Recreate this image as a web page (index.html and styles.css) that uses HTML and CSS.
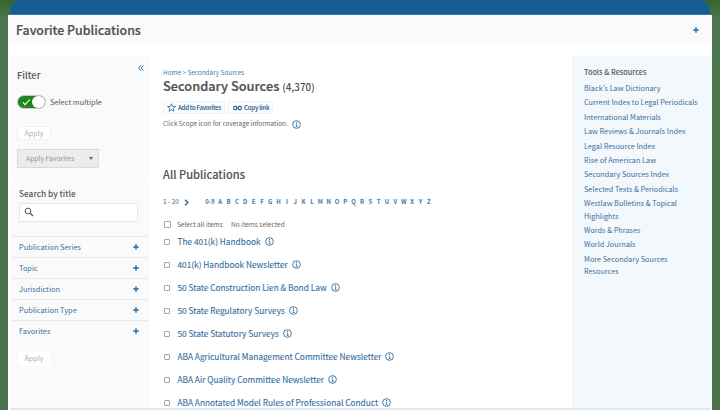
FILE: index.html
```html
<!DOCTYPE html>
<html lang="en">
<head>
<meta charset="utf-8">
<title>Favorite Publications</title>
<link rel="stylesheet" href="styles.css">
</head>
<body>
<svg class="defs" width="0" height="0" aria-hidden="true">
  <symbol id="info" viewBox="0 0 10 10"><circle cx="5" cy="5" r="4.3" fill="none" stroke="currentColor" stroke-width="1"/><path d="M4.2 4.4H5.2V7.2M4 7.3H6.3" fill="none" stroke="currentColor" stroke-width=".9"/><circle cx="5" cy="2.7" r=".65" fill="currentColor"/></symbol>
  <symbol id="plus" viewBox="0 0 6 6"><path d="M3 .3V5.7M.3 3H5.7" fill="none" stroke="currentColor" stroke-width="1.4"/></symbol>
</svg>
<div class="page">
  <div class="topbar"></div>
  <header class="header"><h1>Favorite Publications</h1><svg class="plus"><use href="#plus"/></svg></header>
  <div class="columns">
    <aside class="sidebar">
      <svg class="collapse" viewBox="0 0 6 6"><path d="M2.8.4.7 3l2.1 2.6M5.4.4 3.3 3l2.1 2.6" fill="none" stroke="currentColor" stroke-width=".9"/></svg>
      <h2 class="filter-title">Filter</h2>
      <div class="multi">
        <span class="toggle"><svg viewBox="0 0 9 8"><path d="M1 4.4 3.1 6.6 7.8 1.5" fill="none" stroke="#fff" stroke-width="1.1"/></svg><i class="knob"></i></span>
        <span class="multi-label">Select multiple</span>
      </div>
      <div class="apply">Apply</div>
      <div class="apply-fav"><span>Apply Favorites</span><i class="caret"></i></div>
      <div class="divider"></div>
      <h3 class="search-title">Search by title</h3>
      <div class="search"><svg viewBox="0 0 10 10"><circle cx="4" cy="4" r="2.9" fill="none" stroke="currentColor" stroke-width="1"/><path d="M6.2 6.2 9 9" stroke="currentColor" stroke-width="1.3"/></svg></div>
      <ul class="facets">
        <li><span>Publication Series</span><svg class="plus"><use href="#plus"/></svg></li>
        <li><span>Topic</span><svg class="plus"><use href="#plus"/></svg></li>
        <li><span>Jurisdiction</span><svg class="plus"><use href="#plus"/></svg></li>
        <li><span>Publication Type</span><svg class="plus"><use href="#plus"/></svg></li>
        <li><span>Favorites</span><svg class="plus"><use href="#plus"/></svg></li>
      </ul>
      <div class="apply apply-bottom">Apply</div>
    </aside>
    <main class="main">
      <div class="crumbs">Home &gt; Secondary Sources</div>
      <h2 class="title">Secondary Sources <span>(4,370)</span></h2>
      <div class="actions">
        <div class="action fav"><svg class="star" viewBox="0 0 10 10"><path d="M5 .8 6.2 3.8 9.4 4 6.9 6.1 7.7 9.2 5 7.5 2.3 9.2 3.1 6.1.6 4 3.8 3.8Z" fill="none" stroke="currentColor" stroke-width=".9"/></svg><span>Add to Favorites</span></div>
        <div class="action copy"><svg class="link" viewBox="0 0 10 6"><rect x=".7" y="1.2" width="3.5" height="3.6" rx="1.3" fill="none" stroke="currentColor" stroke-width="1.2"/><rect x="5.8" y="1.2" width="3.5" height="3.6" rx="1.3" fill="none" stroke="currentColor" stroke-width="1.2"/><path d="M3 3H7" stroke="currentColor"/></svg><span>Copy link</span></div>
      </div>
      <div class="scope"><span>Click Scope icon for coverage information.</span><svg class="info"><use href="#info"/></svg></div>
      <h3 class="all">All Publications</h3>
      <div class="pager"><span class="range">1 - 20</span><svg class="next" viewBox="0 0 5 7"><path d="M1 .7 3.9 3.5 1 6.3" fill="none" stroke="currentColor" stroke-width="1.4"/></svg>
        <div class="letters"><b class="num">0-9</b><b>A</b><b>B</b><b>C</b><b>D</b><b>E</b><b>F</b><b>G</b><b>H</b><b>I</b><b>J</b><b>K</b><b>L</b><b>M</b><b>N</b><b>O</b><b>P</b><b>Q</b><b>R</b><b>S</b><b>T</b><b>U</b><b>V</b><b>W</b><b>X</b><b>Y</b><b>Z</b></div>
      </div>
      <div class="select-row"><i class="box"></i><span class="sel">Select all items</span><span class="none">No items selected</span></div>
      <ul class="pubs">
        <li><i class="box"></i><span>The 401(k) Handbook</span><svg class="info"><use href="#info"/></svg></li>
        <li><i class="box"></i><span>401(k) Handbook Newsletter</span><svg class="info"><use href="#info"/></svg></li>
        <li><i class="box"></i><span>50 State Construction Lien &amp; Bond Law</span><svg class="info"><use href="#info"/></svg></li>
        <li><i class="box"></i><span>50 State Regulatory Surveys</span><svg class="info"><use href="#info"/></svg></li>
        <li><i class="box"></i><span>50 State Statutory Surveys</span><svg class="info"><use href="#info"/></svg></li>
        <li><i class="box"></i><span>ABA Agricultural Management Committee Newsletter</span><svg class="info"><use href="#info"/></svg></li>
        <li><i class="box"></i><span>ABA Air Quality Committee Newsletter</span><svg class="info"><use href="#info"/></svg></li>
        <li><i class="box"></i><span>ABA Annotated Model Rules of Professional Conduct</span><svg class="info"><use href="#info"/></svg></li>
      </ul>
    </main>
    <aside class="tools">
      <h4>Tools &amp; Resources</h4>
      <ul>
        <li>Black's Law Dictionary</li>
        <li>Current Index to Legal Periodicals</li>
        <li>International Materials</li>
        <li>Law Reviews &amp; Journals Index</li>
        <li>Legal Resource Index</li>
        <li>Rise of American Law</li>
        <li>Secondary Sources Index</li>
        <li>Selected Texts &amp; Periodicals</li>
        <li>Westlaw Bulletins &amp; Topical<br>Highlights</li>
        <li>Words &amp; Phrases</li>
        <li>World Journals</li>
        <li>More Secondary Sources<br>Resources</li>
      </ul>
    </aside>
  </div>
  <div class="bottom"></div>
</div>
</body>
</html>
```
FILE: styles.css
```css
* { box-sizing: border-box; margin: 0; padding: 0; }
body {
  width: 720px; height: 410px; overflow: hidden; padding: 0 8px;
  background: linear-gradient(#36652f 0, #4b754d 18px, #4a734b 100%);
  font-family: "Noto Sans CJK SC", "Open Sans", sans-serif;
  font-size: 7px; color: #555; white-space: nowrap;
}
ul { list-style: none; }
svg { display: block; flex: none; }
.defs { position: absolute; }
.page { height: 410px; background: linear-gradient(transparent 15px, #fff 15px); display: flex; flex-direction: column; overflow: hidden; }
.topbar { height: 15px; margin: 0 2px; border-radius: 10px 10px 0 0; background: linear-gradient(#155d92 14px, #3c78a3 14px); flex: none; }
.header { height: 29px; background: #fafafa; display: flex; align-items: center; justify-content: space-between; padding: 0 13px 0 8px; flex: none; }
h1 { font-size: 12.4px; line-height: 18px; font-weight: 500; color: #505050; -webkit-text-stroke: .2px; }
.plus { width: 6px; height: 6px; color: #27679a; }
.columns { display: flex; height: 352px; margin-top: 12px; overflow: hidden; flex: none; }

.sidebar { width: 138px; margin-left: 3px; background: #fafafa; flex: none; position: relative; }
.collapse { position: absolute; right: 5px; top: 9px; width: 6px; height: 6px; color: #27679a; }
.filter-title { font-size: 9.4px; line-height: 14px; font-weight: 500; padding: 12px 0 0 6px; }
.multi { display: flex; align-items: center; height: 14px; margin: 13px 0 0 6px; gap: 4px; }
.toggle { width: 29px; height: 14px; border-radius: 7px; background: #21851f; border: 1px solid #c4ccc4; display: flex; align-items: center; justify-content: space-between; padding-left: 4px; }
.toggle svg { width: 9px; height: 8px; }
.knob { width: 13px; height: 12px; border-radius: 6px; background: #fff; }
.multi-label { font-size: 7.4px; line-height: 12px; }
.apply { width: 34px; height: 14px; margin: 17px 0 0 6px; background: #fff; border: 1px solid #f0f0f0; color: #b0b0b0; text-align: center; line-height: 12px; font-size: 7.2px; }
.apply-fav { width: 82px; height: 19px; margin: 9px 0 0 6px; background: #ebecec; border: 1px solid #d9dada; display: flex; align-items: center; justify-content: space-between; padding: 0 5px 0 8px; font-size: 6.8px; line-height: 10px; color: #949494; }
.apply-fav span { margin-top: -1px; }
.caret { border: 2px solid transparent; border-top: 3px solid #666; border-bottom: 0; }
.divider { height: 1px; background: #fff; margin-top: 11px; }
.search-title { font-size: 8.3px; line-height: 12px; font-weight: 500; padding: 7px 0 0 8px; }
.search { width: 119px; height: 19px; margin: 4px 0 0 8px; background: #fff; border: 1px solid #e8e8e8; display: flex; align-items: center; padding: 0 0 2px 4px; color: #555; }
.search svg { width: 10px; height: 10px; }
.facets { margin-top: 14px; color: #3a6f9b; font-size: 7.4px; line-height: 10px; }
.facets li { height: 21.1px; border-top: 1px solid #e9e9e9; display: flex; align-items: center; justify-content: space-between; padding: 0 10px 0 8px; }
.apply-bottom { width: 32px; margin-top: 10px; margin-left: 7px; border-color: #fff; }

.main { width: 423px; padding-left: 14px; flex: none; }
.crumbs { font-size: 6.4px; line-height: 10px; margin-top: 12px; color: #4480ab; }
.title { font-size: 12.8px; line-height: 18px; font-weight: 500; margin-top: -1px; color: #505050; -webkit-text-stroke: .2px; }
.title span { font-size: 9.9px; -webkit-text-stroke: 0; }
.actions { display: flex; gap: 3px; margin-top: 5px; }
.action { height: 13px; border: 1px solid #f0f2f3; background: #fdfdfd; color: #27679a; display: flex; align-items: center; font-size: 6.1px; line-height: 9px; font-weight: 500; }
.action span { margin-top: -1px; }
.fav { width: 62px; padding-left: 3px; gap: 2px; letter-spacing: -.25px; -webkit-text-stroke: .1px; }
.copy { width: 45px; padding-left: 4px; gap: 2px; letter-spacing: -.2px; -webkit-text-stroke: .1px; }
.star { width: 9px; height: 9px; }
.link { width: 9px; height: 6px; }
.scope { display: flex; align-items: center; gap: 4px; height: 12px; margin-top: 4px; font-size: 6.4px; line-height: 10px; color: #666; }
.info { width: 9px; height: 9px; color: #2f6f9f; }
.all { font-size: 11.1px; line-height: 16px; font-weight: 500; margin-top: 36px; color: #555; -webkit-text-stroke: .1px; }
.pager { display: flex; align-items: center; height: 12px; margin-top: 14px; font-size: 6.4px; line-height: 10px; }
.range { width: 21px; }
.next { width: 5px; height: 7px; color: #27679a; }
.letters { display: flex; margin-left: 15px; color: #3f78a5; font-size: 6px; line-height: 10px; font-weight: 700; }
.letters b { width: 8.35px; text-align: center; font-weight: inherit; }
.letters .num { width: 12px; }
.select-row { display: flex; align-items: center; height: 12px; margin-top: 10px; font-size: 6.5px; line-height: 10px; color: #666; }
.box { width: 6px; height: 6px; border: 1px solid #a5a5a5; border-radius: 1px; background: #fff; flex: none; }
.select-row .box { margin-left: 1px; width: 7px; height: 7px; }
.sel { margin-left: 6px; width: 54px; }
.pubs { margin-top: -1px; }
.pubs li { height: 23px; display: flex; align-items: center; color: #34709f; font-size: 8.32px; }
.pubs .box { margin: 2px 8px 0 1px; }
.pubs .box + span { line-height: 12px; margin-left: -.6px; -webkit-text-stroke: .1px; }
.pubs .info { margin: 1px 0 0 4px; }

.tools { width: 140px; background: #f3f8fd; padding: 10px 0 0 12px; border-right: 1px solid #edfaf1; flex: none; }
.tools h4 { font-size: 7.3px; line-height: 12px; font-weight: 500; color: #555; margin-bottom: 3px; }
.tools ul { color: #3a6f9b; font-size: 7.3px; line-height: 12.4px; }
.tools li { padding: 1px 0; }
.bottom { height: 2px; background: #e1e8ef; margin: 0 1px 0 3px; flex: none; }
```
